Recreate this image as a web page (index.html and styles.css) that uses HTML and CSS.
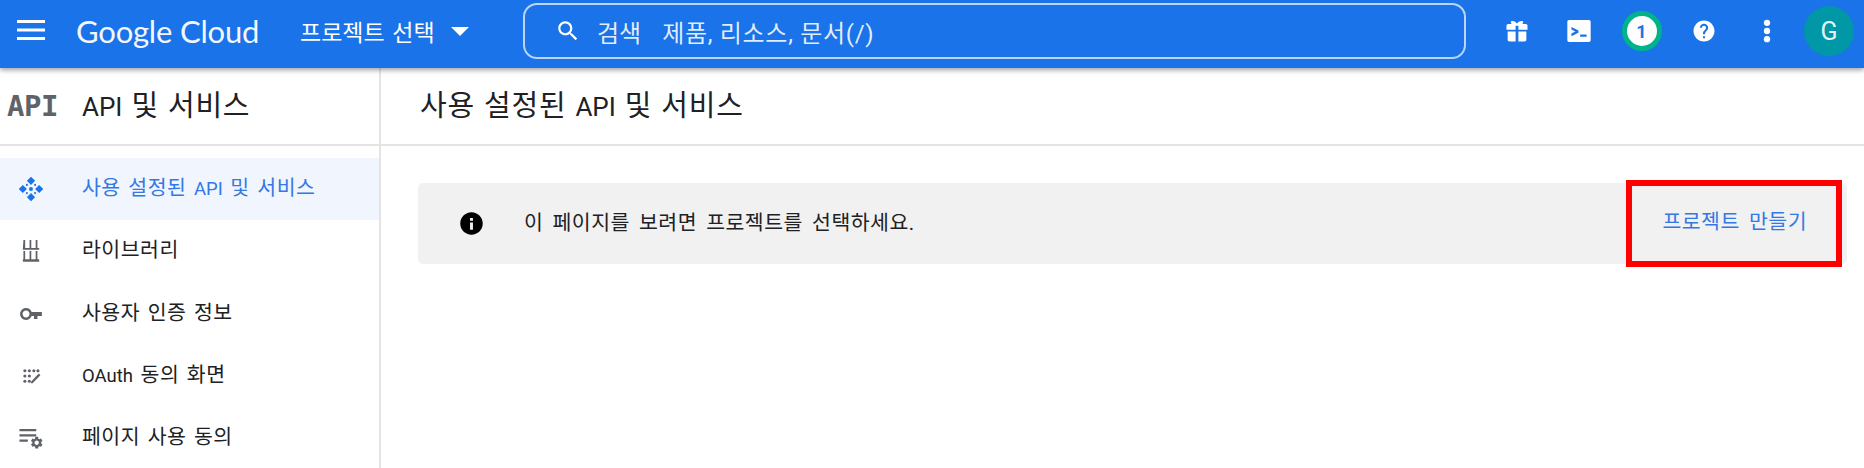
FILE: index.html
```html
<!DOCTYPE html>
<html lang="ko">
<head>
  <meta charset="UTF-8">
  <title>API 및 서비스</title>
  <link rel="stylesheet" href="styles.css">
</head>
<body>
  <header class="topbar">
    <svg class="menu-icon" viewBox="0 0 28 20"><path d="M0 0h28v3H0zM0 8.500h28v3H0zM0 17h28v3H0z"/></svg>
    <div class="logo">Google Cloud</div>
    <div class="project-picker">
      <span class="project-name">프로젝트 선택</span>
      <span class="caret"></span>
    </div>
    <div class="search">
      <svg class="search-icon" viewBox="0 0 24 24"><path d="M15.500 14h-.79l-.28-.27C15.410 12.590 16 11.110 16 9.500 16 5.910 13.090 3 9.500 3S3 5.910 3 9.500 5.910 16 9.500 16c1.610 0 3.090-.59 4.230-1.570l.27.28v.79l5 4.990L20.490 19l-4.990-5zm-6 0C7.010 14 5 11.990 5 9.500S7.010 5 9.500 5 14 7.010 14 9.500 11.990 14 9.500 14z"/></svg>
      <span class="search-label">검색</span>
      <span class="search-hint">제품, 리소스, 문서(/)</span>
    </div>
    <div class="top-actions">
      <svg class="top-icon" viewBox="0 0 24 24"><path d="M3 7.500c0-.8.6-1.500 1.500-1.500h3.200C7 5.500 6.500 4.700 6.700 3.800 7.600 2.900 10.500 3.400 12 5.500c1.500-2.100 4.400-2.600 5.300-1.700.2.900-.3 1.700-1 2.200h3.200c.9 0 1.500.7 1.500 1.500V11h-7.800V7.500h-2.400V11H3zM4 12.500h6.800V21H5.500C4.600 21 4 20.300 4 19.500zM13.200 12.500H20v7c0 .8-.6 1.500-1.500 1.500h-5.300z"/></svg>
      <svg class="top-icon" viewBox="0 0 24 24"><path fill-rule="evenodd" d="M3.500 2.500h17c.8 0 1.500.7 1.500 1.500v16c0 .8-.7 1.500-1.500 1.500h-17c-.8 0-1.500-.7-1.500-1.500V4c0-.8.7-1.500 1.500-1.500zM5.500 8.500v2.300l3.400 1.700-3.400 1.700v2.300l6-3.100v-1.800zM13 15v2h5.500v-2z"/></svg>
      <div class="badge">1</div>
      <svg class="top-icon" viewBox="0 0 24 24"><path transform="translate(1.200 1.200) scale(.9)" d="M12 2C6.480 2 2 6.480 2 12s4.480 10 10 10 10-4.480 10-10S17.520 2 12 2zm1 17h-2v-2h2v2zm2.070-7.750l-.9.92C13.450 12.900 13 13.500 13 15h-2v-.5c0-1.100.45-2.100 1.170-2.830l1.240-1.260c.37-.36.59-.86.59-1.410 0-1.100-.9-2-2-2s-2 .9-2 2H8c0-2.210 1.790-4 4-4s4 1.790 4 4c0 .88-.36 1.680-.93 2.250z"/></svg>
      <svg class="top-icon" viewBox="0 0 24 24"><circle cx="12" cy="5" r="2.700"/><circle cx="12" cy="12" r="2.700"/><circle cx="12" cy="19" r="2.700"/></svg>
      <div class="avatar">G</div>
    </div>
  </header>

  <div class="layout">
    <aside class="sidebar">
      <div class="side-head">
        <span class="api-mark">API</span>
        <span class="side-title"><span class="latin">API</span> 및 서비스</span>
      </div>
      <nav class="nav">
        <a class="nav-item active">
          <svg class="nav-icon" viewBox="0 0 24 24"><path d="M12 1.500l3.500 3.500L12 8.500 8.500 5zM5 8.500L8.500 12 5 15.500 1.500 12zM19 8.500l3.500 3.500-3.500 3.500-3.500-3.500zM12 15.500l3.500 3.500-3.500 3.500L8.500 19z"/><circle cx="12" cy="12" r="1.700"/><circle cx="8.500" cy="8.500" r=".9"/><circle cx="15.500" cy="8.500" r=".9"/><circle cx="8.500" cy="15.500" r=".9"/><circle cx="15.500" cy="15.500" r=".9"/></svg>
          <span class="nav-label">사용 설정된 <span class="latin">API</span> 및 서비스</span>
        </a>
        <a class="nav-item">
          <svg class="nav-icon" viewBox="0 0 24 24"><path d="M5.500 2.500H7v7h3.750v-7h1.500v7H16v-7h1.500v7h1.500V11H5zM5.500 12H7v7h3.750v-7h1.500v7H16v-7h1.500v7h1.500v2.200H5V19h.5z"/></svg>
          <span class="nav-label">라이브러리</span>
        </a>
        <a class="nav-item">
          <svg class="nav-icon" viewBox="0 0 24 24"><path transform="translate(1.800 1.800) scale(.85)" d="M12.650 10C11.830 7.670 9.610 6 7 6c-3.310 0-6 2.690-6 6s2.690 6 6 6c2.610 0 4.830-1.670 5.650-4H15v3h3.500v-3H23v-4H12.650zM7 15.500c-1.930 0-3.500-1.570-3.500-3.500S5.070 8.500 7 8.500s3.500 1.570 3.500 3.500-1.570 3.500-3.500 3.500z"/></svg>
          <span class="nav-label">사용자 인증 정보</span>
        </a>
        <a class="nav-item">
          <svg class="nav-icon" viewBox="0 0 24 24"><g transform="translate(3.600 3.600) scale(.7)"><circle cx="4.500" cy="5.500" r="1.900"/><circle cx="10" cy="5.500" r="1.900"/><circle cx="15.500" cy="5.500" r="1.900"/><circle cx="20.500" cy="5.500" r="1.900"/><circle cx="4.500" cy="12" r="1.900"/><circle cx="10" cy="12" r="1.900"/><circle cx="4.500" cy="18.500" r="1.900"/><circle cx="10" cy="18.500" r="1.900"/><path d="M21.500 9l2 2-9.500 10H12v-2z"/></g></svg>
          <span class="nav-label"><span class="latin">OAuth</span> 동의 화면</span>
        </a>
        <a class="nav-item">
          <svg class="nav-icon" viewBox="0 0 24 24"><g transform="translate(1.200 1.200) scale(.9)"><path d="M1 3.500h16v2H1zM1 8.500h16v2H1zM1 13.500h8v2H1z"/><g transform="translate(10.500 9.500) scale(.58)"><path d="M19.140 12.940c.04-.3.06-.61.06-.94 0-.32-.02-.64-.07-.94l2.030-1.580c.18-.14.23-.41.12-.61l-1.920-3.320c-.12-.22-.37-.29-.59-.22l-2.390.96c-.5-.38-1.030-.7-1.620-.94l-.36-2.540c-.04-.24-.24-.41-.48-.41h-3.840c-.24 0-.43.17-.47.41l-.36 2.540c-.59.24-1.130.57-1.620.94l-2.390-.96c-.22-.08-.47 0-.59.22L2.740 8.870c-.12.21-.08.47.12.61l2.030 1.580c-.05.3-.09.63-.09.94s.02.64.07.94l-2.030 1.580c-.18.14-.23.41-.12.61l1.920 3.320c.12.22.37.29.59.22l2.390-.96c.5.38 1.030.7 1.620.94l.36 2.540c.05.24.24.41.48.41h3.840c.24 0 .44-.17.47-.41l.36-2.540c.59-.24 1.130-.56 1.620-.94l2.390.96c.22.08.47 0 .59-.22l1.920-3.320c.12-.22.07-.47-.12-.61l-2.010-1.580zM12 15.600c-1.980 0-3.600-1.620-3.600-3.600s1.620-3.600 3.600-3.600 3.600 1.620 3.600 3.600-1.620 3.600-3.600 3.600z"/></g></g></svg>
          <span class="nav-label">페이지 사용 동의</span>
        </a>
      </nav>
    </aside>

    <main class="content">
      <div class="page-head"><span class="page-title">사용 설정된 <span class="latin">API</span> 및 서비스</span></div>
      <div class="notice">
        <svg class="notice-icon" viewBox="0 0 24 24"><path d="M12 2C6.480 2 2 6.480 2 12s4.480 10 10 10 10-4.480 10-10S17.520 2 12 2zm1.300 15.500h-2.600v-6.500h2.600v6.500zm0-8h-2.600V7h2.600v2.500z"/></svg>
        <span class="notice-text">이 페이지를 보려면 프로젝트를 선택하세요.</span>
        <a class="notice-link">프로젝트 만들기</a>
        <div class="highlight"></div>
      </div>
    </main>
  </div>
</body>
</html>
```

FILE: styles.css
```css
* {
  box-sizing: border-box;
}
html, body {
  height: 100%;
}
body {
  margin: 0;
  overflow: hidden;
  font-family: Roboto, "Noto Sans CJK KR", sans-serif;
  color: #202124;
  background-color: #fff;
}

/* top bar */
.topbar {
  position: relative;
  z-index: 2;
  display: flex;
  align-items: center;
  height: 68px;
  padding-left: 17px;
  color: #fff;
  background-color: #1a73e8;
  box-shadow: 0 2px 5px rgba(60, 64, 67, 0.5);
}
.menu-icon {
  flex: none;
  width: 28px;
  height: 20px;
  margin-top: -8px;
  fill: #fff;
}
.logo {
  flex: none;
  width: 224px;
  margin-top: -6px;
  margin-left: 31px;
  font-family: Lato, sans-serif;
  font-size: 31px;
  letter-spacing: -0.2px;
  white-space: nowrap;
  opacity: 0.95;
}
.project-picker {
  display: flex;
  flex: none;
  align-items: center;
  width: 223px;
  margin-top: -6px;
  font-size: 23px;
}
.project-name {
  word-spacing: 2px;
}
.caret {
  width: 0;
  height: 0;
  margin-left: 16px;
  border-top: 9px solid #fff;
  border-right: 9.500px solid transparent;
  border-left: 9.500px solid transparent;
}
.search {
  display: flex;
  flex: none;
  align-items: center;
  width: 943px;
  height: 56px;
  margin-top: -6px;
  padding-left: 30px;
  border: 2px solid rgba(255, 255, 255, 0.7);
  border-radius: 14px;
  font-size: 24px;
  color: rgba(255, 255, 255, 0.88);
}
.search-icon {
  flex: none;
  width: 26px;
  height: 26px;
  fill: #fff;
}
.search-label {
  margin-left: 16px;
}
.search-hint {
  margin-left: 21px;
  letter-spacing: 0.7px;
}
.top-actions {
  display: flex;
  flex: 1;
  align-items: center;
  justify-content: flex-end;
  gap: 34.500px;
  margin-top: -6px;
  padding-right: 10px;
}
.top-icon {
  flex: none;
  width: 28px;
  height: 28px;
  fill: #fff;
}
.badge {
  display: flex;
  flex: none;
  align-items: center;
  justify-content: center;
  width: 40px;
  height: 40px;
  margin: 0 -6px;
  border: 5px solid #00b38a;
  border-radius: 50%;
  font-size: 18px;
  font-weight: 700;
  color: #1a73e8;
  background-color: #fff;
}
.avatar {
  display: flex;
  flex: none;
  align-items: center;
  justify-content: center;
  width: 50px;
  height: 50px;
  margin-left: -11px;
  border-radius: 50%;
  font-size: 25px;
  color: #e3f4f5;
  background-color: #0097a7;
}

/* page */
.layout {
  display: flex;
  height: 400px;
}
.sidebar {
  flex: none;
  width: 381px;
  border-right: 2px solid #e4e4e4;
}
.side-head {
  display: flex;
  align-items: center;
  height: 78px;
  padding-left: 7px;
  border-bottom: 2px solid #e4e4e4;
}
.api-mark {
  width: 75px;
  font-family: "DejaVu Sans Mono", monospace;
  font-size: 29px;
  font-weight: 700;
  letter-spacing: -0.5px;
  color: #5f6368;
}
.side-title, .page-title {
  padding-bottom: 6px;
  font-size: 29px;
  letter-spacing: 0.8px;
  word-spacing: 1px;
}
.side-title .latin, .page-title .latin {
  font-size: 26px;
  letter-spacing: 0;
}
.nav {
  padding-top: 12px;
}
.nav-item {
  display: flex;
  align-items: center;
  height: 62.300px;
  padding-left: 17px;
  font-size: 20.500px;
  letter-spacing: 0.5px;
  word-spacing: 2px;
}
.nav-label {
  padding-bottom: 6px;
}
.nav-label .latin {
  font-size: 18.500px;
  letter-spacing: 0;
}
.nav-item.active {
  color: #3478e6;
  background-color: #f0f5fe;
}
.nav-icon {
  flex: none;
  width: 28px;
  height: 28px;
  margin-right: 37px;
  fill: #5f6368;
}
.active .nav-icon {
  fill: #1a73e8;
}
.content {
  flex: 1;
}
.page-head {
  display: flex;
  align-items: center;
  height: 78px;
  padding-left: 39px;
  border-bottom: 2px solid #e4e4e4;
}
.notice {
  position: relative;
  display: flex;
  align-items: center;
  height: 81px;
  margin: 37px 17px 0 37px;
  padding: 0 40px;
  border-radius: 5px;
  background-color: #f1f1f1;
}
.notice-icon {
  flex: none;
  width: 27px;
  height: 27px;
}
.notice-text {
  flex: 1;
  margin-left: 39px;
  padding-bottom: 6px;
  font-size: 20.500px;
  letter-spacing: 0.5px;
  word-spacing: 3.500px;
}
.notice-link {
  padding-bottom: 8px;
  font-size: 20.500px;
  letter-spacing: 0.5px;
  word-spacing: 3.500px;
  color: #3478e6;
}
.highlight {
  position: absolute;
  top: -3px;
  right: 5px;
  bottom: -3px;
  width: 216px;
  border: 6px solid #f00;
}
```
